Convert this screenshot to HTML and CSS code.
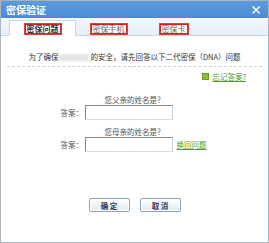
FILE: index.html
```html
<!DOCTYPE html>
<html>
<head>
<meta charset="utf-8">
<link rel="stylesheet" href="styles.css">
</head>
<body>
<div class="dialog">
  <div class="titlebar">
    <span class="title">密保验证</span>
    <span class="close">×</span>
  </div>
  <div class="tabs">
    <div class="tab active"><span class="mark">密保问题</span></div>
    <div class="tab"><span class="mark">密保手机</span></div>
    <div class="tab"><span class="mark">密保卡</span></div>
  </div>
  <div class="body">
    <p class="intro">为了确保<span class="blur">xxxxxxxx</span>的安全，请先回答以下二代密保（DNA）问题</p>
    <div class="forgot"><span class="icon"></span><a>忘记答案?</a></div>
    <div class="q first">您父亲的姓名是？</div>
    <div class="row"><span class="lbl">答案：</span><span class="input"></span></div>
    <div class="q">您母亲的姓名是？</div>
    <div class="row"><span class="lbl">答案：</span><span class="input"></span><a class="swap">换回问题</a></div>
    <div class="buttons">
      <button class="btn">确 定</button>
      <button class="btn">取 消</button>
    </div>
  </div>
</div>
</body>
</html>
```
FILE: styles.css
```css
html, body { margin: 0; padding: 0; background: #fff; }
body { font-family: "Noto Sans CJK SC", "Liberation Sans", sans-serif; }
.dialog {
  width: 267px; height: 241px;
  border: 1px solid #aab4be;
  display: flex; flex-direction: column;
  background: #fff;
}
.titlebar {
  height: 17px; background: linear-gradient(#5b9ce0, #4a8bd2);
  display: flex; align-items: center; justify-content: space-between;
  padding: 0 6px 0 5px; color: #fff;
}
.title { font-size: 10px; font-weight: bold; }
.close { font-size: 12px; font-weight: bold; line-height: 1; }
.tabs {
  height: 17px; background: linear-gradient(#f4f8fc, #e6eef7);
  border-bottom: 1px solid #c9d6e3;
  display: flex; align-items: flex-end; padding-left: 8px;
}
.tab {
  width: 65px; height: 14px;
  display: flex; align-items: center; justify-content: center;
  margin-bottom: -1px;
}
.tab.active {
  background: #fff; border: 1px solid #c9d6e3; border-bottom: none; height: 15px;
}
.mark {
  font-size: 8px; line-height: 8px; color: #666;
  border: 1px solid #d42020; outline: 1px solid #e04040;
  padding: 0 1px; background: #fff;
}
.tab.active .mark { color: #333; font-weight: bold; }
.body { flex: 1; display: flex; flex-direction: column; align-items: center; }
.intro {
  margin: 16px 0 0; padding: 0 0 4px; width: 255px; text-align: center;
  font-size: 7.5px; line-height: 10px; color: #333; border-bottom: 1px dashed #d0d0d0;
}
.blur { display: inline-block; width: 30px; height: 7px; background: #e4e4e4; color: transparent; filter: blur(1px); vertical-align: middle; font-size: 1px; margin: 0 1px; }
.forgot { align-self: flex-end; margin: 5px 22px 0 0; display: flex; align-items: center; gap: 3px; font-size: 7.5px; line-height: 9px; }
.forgot .icon { width: 5px; height: 5px; background: #8fbf2f; border: 1px solid #6f9f20; }
.forgot a, .swap { color: #5a9a1a; text-decoration: underline; }
.q { font-size: 7.5px; line-height: 9px; color: #555; margin-top: 7px; }
.q.first { margin-top: 14px; }
.q + .row { margin-top: 1px; }
.row { display: flex; align-items: center; width: 200px; }
.lbl { font-size: 7.5px; color: #555; width: 24px; margin-left: 26px; }
.input { width: 88px; height: 15px; border: 1px solid #888; border-right-color: #ccc; border-bottom-color: #ddd; box-sizing: border-box; }
.swap { font-size: 7.5px; margin-left: 4px; }
.buttons { margin-top: 46px; display: flex; gap: 10px; }
.btn {
  width: 41px; height: 14px; padding: 0;
  font-family: inherit; font-size: 7.5px; font-weight: bold; color: #335;
  border: 1px solid #8aa4bc; border-radius: 2px;
  background: linear-gradient(#ffffff, #e2e8ee);
  box-shadow: inset 0 0 0 1px #fff;
}
```
